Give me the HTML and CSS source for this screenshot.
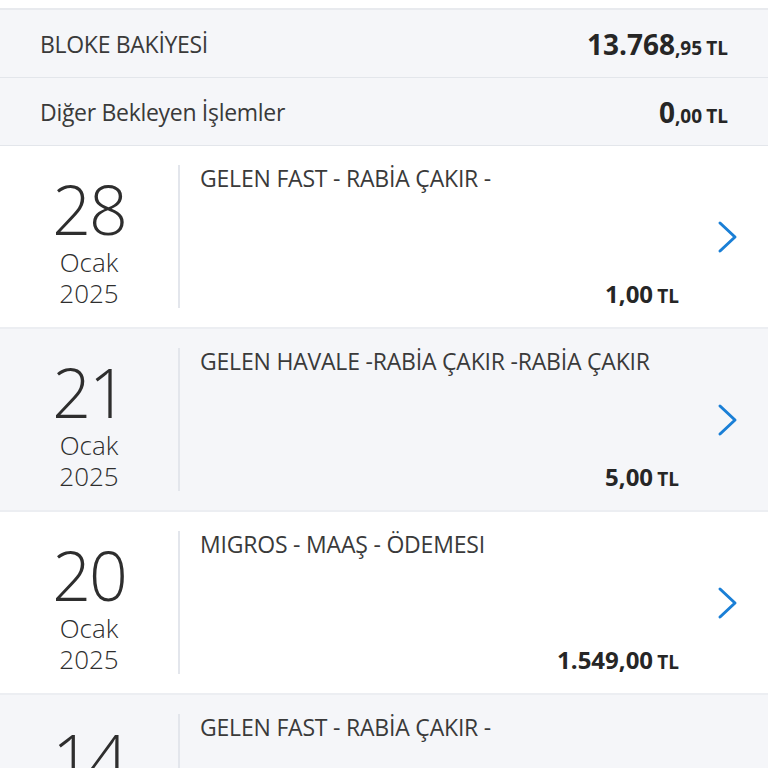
FILE: index.html
```html
<!DOCTYPE html>
<html lang="tr">
<head>
<meta charset="utf-8">
<link rel="stylesheet" href="styles.css">
</head>
<body>
<div class="topbar"></div>
<div class="summary first">
  <span class="label upper">BLOKE BAKİYESİ</span>
  <span class="value"><span class="int">13.768</span><span class="dec">,95</span> <span class="cur">TL</span></span>
</div>
<div class="summary">
  <span class="label">Diğer Bekleyen İşlemler</span>
  <span class="value"><span class="int">0</span><span class="dec">,00</span> <span class="cur">TL</span></span>
</div>

<div class="tx">
  <div class="date"><div class="day">28</div><div class="month">Ocak</div><div class="year">2025</div></div>
  <div class="body">
    <div class="title">GELEN FAST - RABİA ÇAKIR -</div>
    <div class="amount"><span class="int">1</span><span class="dec">,00</span> <span class="cur">TL</span></div>
  </div>
  <div class="chev"><svg width="22" height="34" viewBox="0 0 22 34"><path d="M3 3 L18 17 L3 31" fill="none" stroke="#1a7fd6" stroke-width="3" stroke-linecap="round" stroke-linejoin="round"/></svg></div>
</div>

<div class="tx alt">
  <div class="date"><div class="day">21</div><div class="month">Ocak</div><div class="year">2025</div></div>
  <div class="body">
    <div class="title">GELEN HAVALE -RABİA ÇAKIR -RABİA ÇAKIR</div>
    <div class="amount"><span class="int">5</span><span class="dec">,00</span> <span class="cur">TL</span></div>
  </div>
  <div class="chev"><svg width="22" height="34" viewBox="0 0 22 34"><path d="M3 3 L18 17 L3 31" fill="none" stroke="#1a7fd6" stroke-width="3" stroke-linecap="round" stroke-linejoin="round"/></svg></div>
</div>

<div class="tx">
  <div class="date"><div class="day">20</div><div class="month">Ocak</div><div class="year">2025</div></div>
  <div class="body">
    <div class="title">MIGROS - MAAŞ - ÖDEMESI</div>
    <div class="amount"><span class="int">1.549</span><span class="dec">,00</span> <span class="cur">TL</span></div>
  </div>
  <div class="chev"><svg width="22" height="34" viewBox="0 0 22 34"><path d="M3 3 L18 17 L3 31" fill="none" stroke="#1a7fd6" stroke-width="3" stroke-linecap="round" stroke-linejoin="round"/></svg></div>
</div>

<div class="tx alt">
  <div class="date"><div class="day">14</div><div class="month">Ocak</div><div class="year">2025</div></div>
  <div class="body">
    <div class="title">GELEN FAST - RABİA ÇAKIR -</div>
    <div class="amount"><span class="int">1</span><span class="dec">,00</span> <span class="cur">TL</span></div>
  </div>
  <div class="chev"><svg width="22" height="34" viewBox="0 0 22 34"><path d="M3 3 L18 17 L3 31" fill="none" stroke="#1a7fd6" stroke-width="3" stroke-linecap="round" stroke-linejoin="round"/></svg></div>
</div>
</body>
</html>
```
FILE: styles.css
```css
html, body {
  margin: 0;
  padding: 0;
  background: #ffffff;
  font-family: "Open Sans", "Noto Sans", sans-serif;
  color: #363636;
  overflow: hidden;
  height: 768px;
}
.topbar {
  height: 8px;
  background: #ffffff;
  border-bottom: 2px solid #e8eaee;
}
.summary {
  height: 68px;
  box-sizing: border-box;
  background: #f5f6f9;
  border-bottom: 1px solid #e3e6eb;
  display: flex;
  align-items: center;
  justify-content: space-between;
  padding: 0 40px 0 40px;
}
.label {
  font-size: 23px;
  color: #3a3a3a;
  letter-spacing: -0.3px;
}
.value {
  font-weight: 700;
  color: #262626;
  white-space: nowrap;
}
.value .int { font-size: 28px; }
.value .dec { font-size: 19px; }
.value .cur { font-size: 19px; }

.tx {
  height: 183px;
  box-sizing: border-box;
  display: flex;
  background: #ffffff;
  border-bottom: 2px solid #eceef2;
}
.tx.alt { background: #f5f6f9; }
.date {
  width: 178px;
  flex: none;
  box-sizing: border-box;
  text-align: center;
  padding-top: 24px;
  color: #2e2e2e;
}
.day {
  font-size: 68px;
  font-weight: 300;
  line-height: 77px;
  letter-spacing: -2px;
}
.month, .year {
  font-size: 26px;
  font-weight: 300;
  line-height: 31px;
}
.body {
  flex: 1;
  margin: 19px 0 19px 0;
  border-left: 2px solid #e3e6ec;
  padding: 0 0 0 20px;
  display: flex;
  flex-direction: column;
  justify-content: space-between;
}
.title {
  font-size: 23px;
  line-height: 30px;
  margin-top: -2px;
  color: #3a3a3a;
  letter-spacing: -0.2px;
}
.amount {
  align-self: flex-end;
  font-weight: 700;
  color: #262626;
  white-space: nowrap;
  line-height: 30px;
  margin-bottom: -4px;
}
.amount .int, .amount .dec { font-size: 24px; }
.amount .cur { font-size: 19px; }
.chev {
  width: 89px;
  flex: none;
  display: flex;
  align-items: center;
  justify-content: center;
  padding-left: 8px;
  box-sizing: border-box;
}
```
